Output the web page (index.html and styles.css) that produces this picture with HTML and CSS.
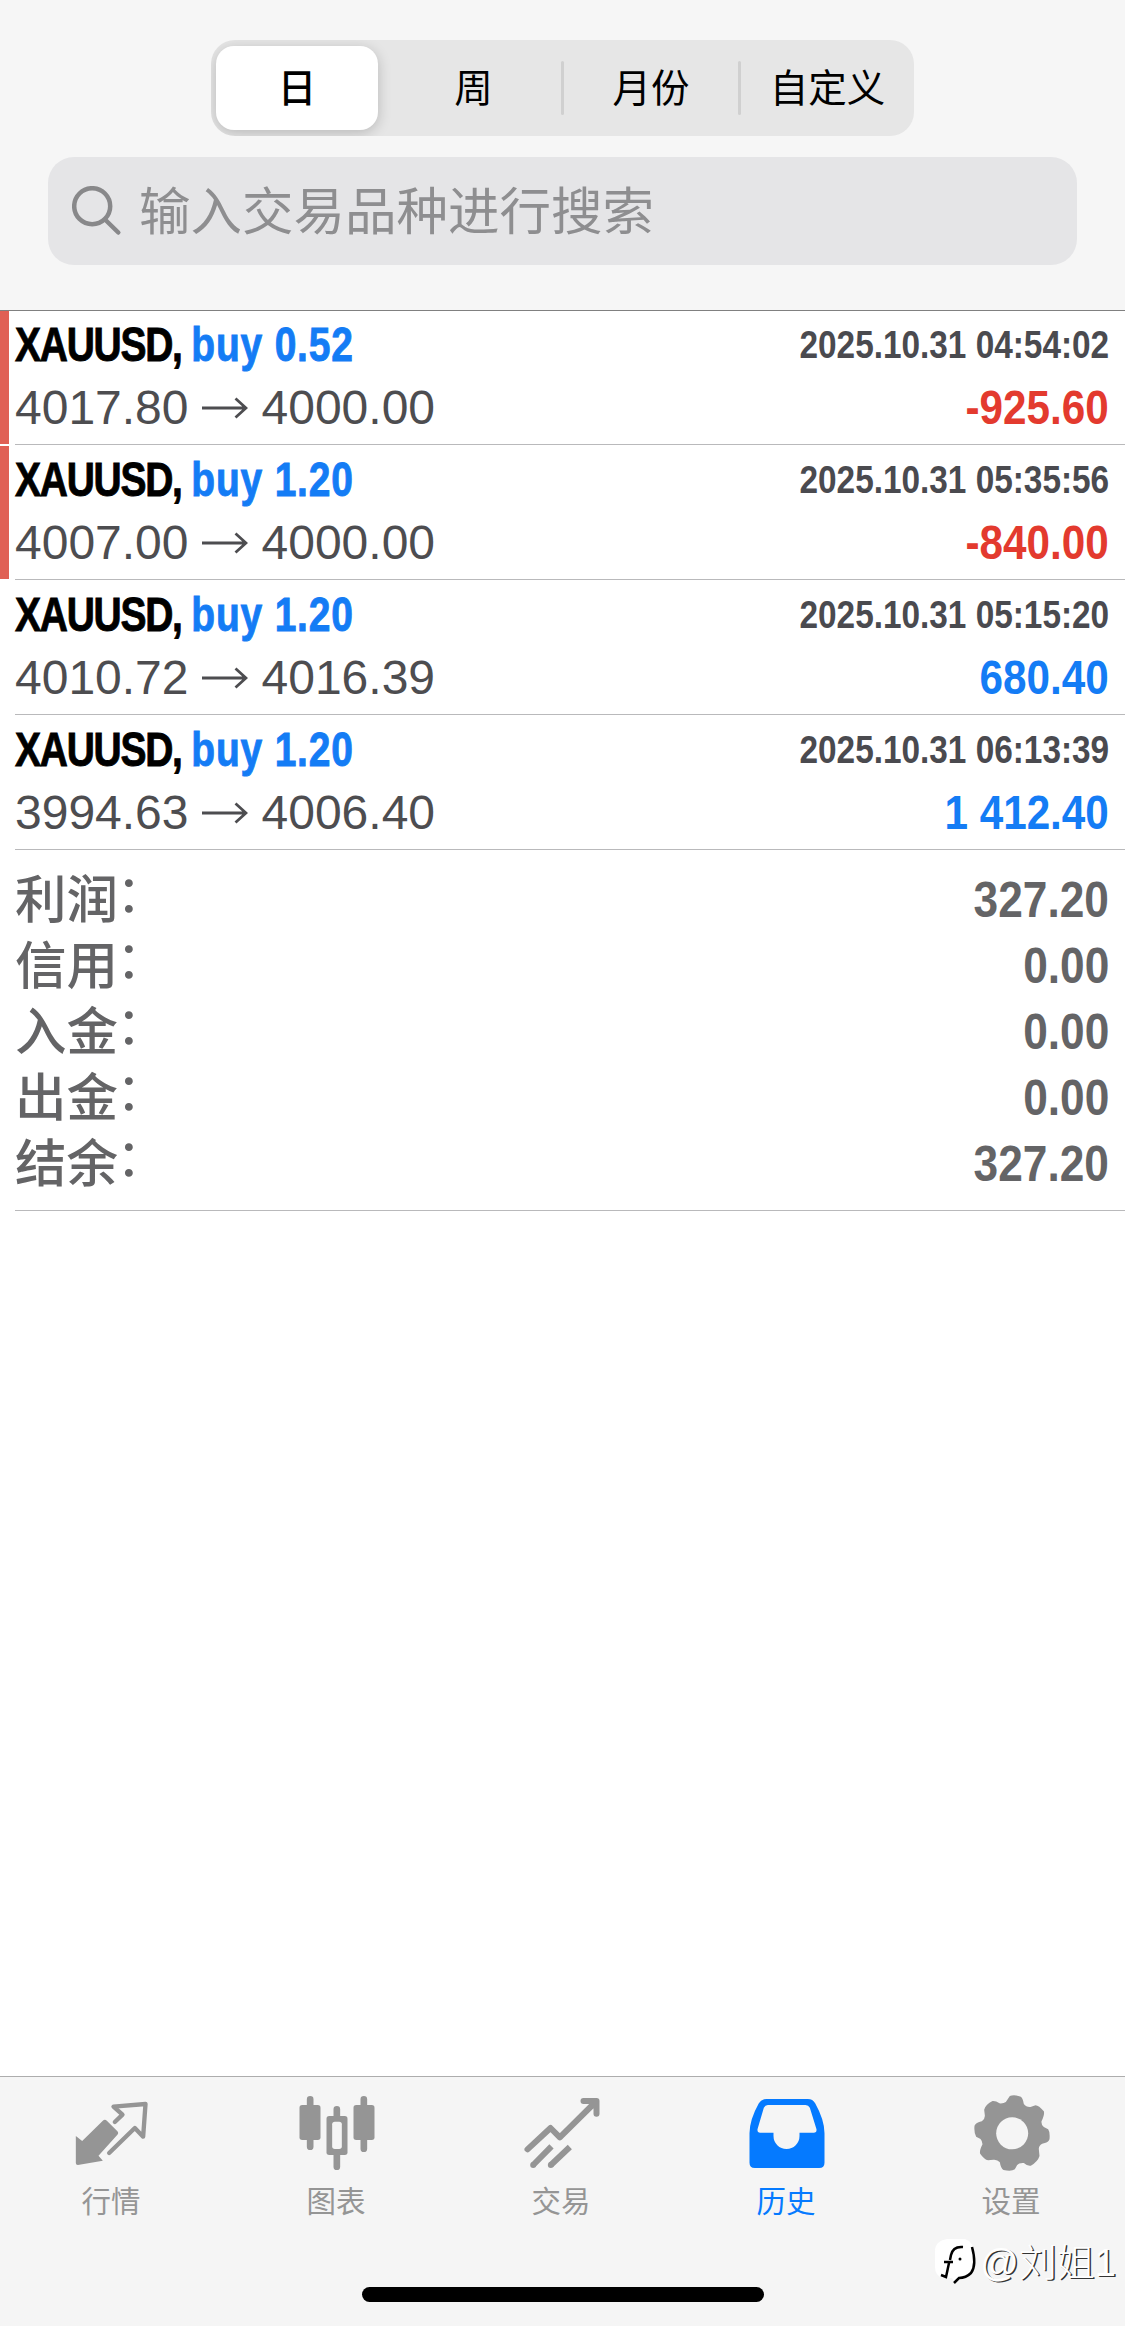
FILE: index.html
```html
<!DOCTYPE html>
<html lang="zh-CN">
<head>
<meta charset="utf-8">
<title>历史</title>
<link rel="stylesheet" href="styles.css">
</head>
<body>
<div class="screen">
  <header class="header">
    <nav class="segments">
      <span class="segment segment-active">日</span>
      <span class="segment segment-week">周</span>
      <i class="divider"></i>
      <span class="segment segment-month">月份</span>
      <i class="divider"></i>
      <span class="segment segment-custom">自定义</span>
    </nav>
    <div class="search">
      <svg class="search-icon" viewBox="0 0 50 50"><circle cx="20.2" cy="20.2" r="18" /><path d="M33 33.500L46.300 46.500" /></svg>
      <span class="search-hint">输入交易品种进行搜索</span>
    </div>
  </header>

  <main class="history">
    <article class="deal deal-loss">
      <div class="deal-body">
        <div class="line"><span class="title"><b class="symbol">XAUUSD, </b><b class="side">buy 0.52</b></span><time class="time">2025.10.31 04:54:02</time></div>
        <div class="line"><span class="prices">4017.80<svg class="arrow" viewBox="0 0 46 22"><path d="M0 11H44M33.500 1.500L44 11L33.500 20.500" /></svg>4000.00</span><span class="profit negative">-925.60</span></div>
      </div>
    </article>
    <article class="deal deal-loss">
      <div class="deal-body">
        <div class="line"><span class="title"><b class="symbol">XAUUSD, </b><b class="side">buy 1.20</b></span><time class="time">2025.10.31 05:35:56</time></div>
        <div class="line"><span class="prices">4007.00<svg class="arrow" viewBox="0 0 46 22"><path d="M0 11H44M33.500 1.500L44 11L33.500 20.500" /></svg>4000.00</span><span class="profit negative">-840.00</span></div>
      </div>
    </article>
    <article class="deal">
      <div class="deal-body">
        <div class="line"><span class="title"><b class="symbol">XAUUSD, </b><b class="side">buy 1.20</b></span><time class="time">2025.10.31 05:15:20</time></div>
        <div class="line"><span class="prices">4010.72<svg class="arrow" viewBox="0 0 46 22"><path d="M0 11H44M33.500 1.500L44 11L33.500 20.500" /></svg>4016.39</span><span class="profit">680.40</span></div>
      </div>
    </article>
    <article class="deal">
      <div class="deal-body">
        <div class="line"><span class="title"><b class="symbol">XAUUSD, </b><b class="side">buy 1.20</b></span><time class="time">2025.10.31 06:13:39</time></div>
        <div class="line"><span class="prices">3994.63<svg class="arrow" viewBox="0 0 46 22"><path d="M0 11H44M33.500 1.500L44 11L33.500 20.500" /></svg>4006.40</span><span class="profit">1 412.40</span></div>
      </div>
    </article>

    <section class="summary">
      <div class="total"><span class="label">利润<i class="colon">：</i></span><b class="amount">327.20</b></div>
      <div class="total"><span class="label">信用<i class="colon">：</i></span><b class="amount">0.00</b></div>
      <div class="total"><span class="label">入金<i class="colon">：</i></span><b class="amount">0.00</b></div>
      <div class="total"><span class="label">出金<i class="colon">：</i></span><b class="amount">0.00</b></div>
      <div class="total"><span class="label">结余<i class="colon">：</i></span><b class="amount">327.20</b></div>
    </section>
  </main>

  <footer class="tabbar">
    <div class="tabs">
      <div class="tab">
        <svg class="tab-icon" viewBox="97.500 99 240 240">
          <path class="fill" d="M106 228L125 243L187 182Q193 177 199 182L230 213Q236 219 230 225L174 287L187 302L112 315Q106 315 106 309Z" />
          <path class="stroke" stroke-width="13" stroke-linejoin="round" d="M223 186L246 164L219 140L315 132L308 230L283 204L206 279" stroke-linecap="round" />
        </svg>
        <span>行情</span>
      </div>
      <div class="tab">
        <svg class="tab-icon" viewBox="772.500 99 240 240">
          <path class="stroke" stroke-width="20" stroke-linecap="round" d="M809 118V260M970 118V266M889 148V172M889 282V320" />
          <rect class="fill" x="777" y="135" width="63" height="105" rx="8" />
          <rect class="fill" x="939" y="135" width="63" height="105" rx="8" />
          <rect class="fill" x="858" y="168" width="63" height="117" rx="8" />
          <rect class="hole" x="875" y="185" width="29" height="82" rx="8" />
        </svg>
        <span>图表</span>
      </div>
      <div class="tab">
        <svg class="tab-icon" viewBox="97.500 99 240 240">
          <path class="stroke" stroke-width="18" stroke-linecap="round" stroke-linejoin="round" d="M111 268L180 204L208 232L315 126M279 123H318V161" />
          <path class="stroke" stroke-width="18" d="M128 315L183 259M181 315L238 261" />
          <circle class="fill" cx="128" cy="315" r="9" /><circle class="fill" cx="181" cy="315" r="9" />
        </svg>
        <span>交易</span>
      </div>
      <div class="tab tab-active">
        <svg class="tab-icon" viewBox="772.500 99 240 240">
          <path class="fill" d="M828 117H952Q967 117 974 130Q1002 180 1002 220V308Q1002 324 986 324H793Q777 324 777 308V220Q777 180 805 130Q813 117 828 117Z" />
          <path class="hole" d="M832 135H945Q954 135 958 143L978 208Q979 218 970 218H927V228A39 39 0 0 1 849 228V218H809Q800 218 801 208L820 143Q824 135 832 135Z" />
        </svg>
        <span>历史</span>
      </div>
      <div class="tab">
        <svg class="tab-icon" viewBox="217.500 99 240 240">
          <path class="fill" d="M328 108Q342 103 361 110Q367 114 370 132Q377 142 390 141L405 136Q415 136 430 154Q433 163 423 184Q422 195 430 201L443 208Q449 216 447 238Q443 249 425 251Q414 257 415 268L417 288Q412 305 391 317Q381 319 370 309Q355 308 350 315L343 328Q333 335 309 330Q301 326 298 307Q291 298 279 299L263 301Q251 298 239 281Q236 273 246 253Q245 242 240 237L227 230Q220 220 222 197Q226 188 244 184Q254 176 253 166L251 149Q256 132 276 123Q286 122 297 130Q309 131 316 126Z" />
          <circle class="hole" cx="335" cy="220" r="48" />
        </svg>
        <span>设置</span>
      </div>
    </div>
    <div class="home-indicator"></div>
    <div class="watermark">
      <svg class="watermark-logo" viewBox="0 0 40 48">
        <path class="badge" d="M12 0H30Q39 3 39 14V26Q39 36 27 39L20 44L17 39H8Q0 37 0 28V12Q0 2 12 0Z" />
        <path class="ink" d="M28 8Q18 7 16 16L15 21M9 23H18M14 24L11 38L6 36M37 8Q42 26 36 34Q31 39 24 39L19 44" />
        <circle cx="25" cy="20" r="1.500" />
      </svg>
      <span>@刘姐1</span>
    </div>
  </footer>
</div>
</body>
</html>
```
FILE: styles.css
```css
* { box-sizing: border-box; }

body {
  margin: 0;
  background: #fff;
  font-family: "Liberation Sans", "Noto Sans CJK SC", sans-serif;
}

i { font-style: normal; }

.screen {
  width: 1125px;
  height: 2326px;
  display: flex;
  flex-direction: column;
  overflow: hidden;
}

/* Header */
.header {
  height: 311px;
  padding: 40px 48px 0;
  background: #f6f6f6;
  border-bottom: 1px solid #808080;
}

.segments {
  width: 703px;
  height: 96px;
  margin: 0 auto 21px 163px;
  padding: 6px 0 6px 5px;
  display: flex;
  align-items: center;
  border-radius: 24px;
  background: #e6e6e6;
  overflow: hidden;
}

.segment {
  height: 84px;
  padding-top: 1px;
  text-align: center;
  font-size: 38.500px;
  line-height: 84px;
  color: #000;
}

.segment-active {
  width: 162px;
  margin-right: 8px;
  border-radius: 18px;
  background: #fff;
  box-shadow: 0 3px 14px rgba(0, 0, 0, 0.2);
  font-weight: 500;
}

.segment-week { width: 175px; }
.segment-month { width: 174px; }
.segment-custom { flex: 1; }

.divider {
  width: 3px;
  height: 54px;
  border-radius: 2px;
  background: #d0d0d0;
}

.search {
  height: 108px;
  padding-left: 24px;
  display: flex;
  align-items: center;
  border-radius: 26px;
  background: #e5e5e7;
}

.search-icon {
  width: 50px;
  height: 50px;
  margin-right: 17px;
  fill: none;
  stroke: #88888a;
  stroke-width: 4.500;
  stroke-linecap: round;
}

.search-hint {
  padding-top: 3px;
  font-size: 51.500px;
  line-height: 105px;
  color: #8e8e90;
}

/* Deals */
.history { flex: 1; }

.deal {
  height: 135px;
  padding-left: 15px;
}

.deal-loss {
  background: linear-gradient(#e06055, #e06055) 0 0 / 9px 133px no-repeat;
}

.deal-body {
  height: 134px;
  padding: 2px 16px 0 0;
  border-bottom: 1px solid #b9b9bb;
}

.line {
  height: 63px;
  display: flex;
  justify-content: space-between;
  line-height: 63px;
  white-space: pre;
}

.title {
  font-size: 47.500px;
  -webkit-text-stroke: 0.9px;
  transform: scaleX(0.82);
  transform-origin: left;
}

.symbol { letter-spacing: -1.500px; color: #000; }
.side { letter-spacing: 1px; color: #147cf5; }

.time {
  font-size: 39px;
  font-weight: 700;
  color: #4a4a4f;
  transform: scaleX(0.855);
  transform-origin: right;
}

.prices {
  display: flex;
  align-items: center;
  font-size: 48px;
  color: #4d4d50;
}

.arrow {
  width: 46px;
  height: 22px;
  margin: 0 14px 0 13px;
  fill: none;
  stroke: #4d4d50;
  stroke-width: 2.800;
}

.profit {
  font-size: 48px;
  font-weight: 700;
  color: #147cf5;
  transform: scaleX(0.88);
  transform-origin: right;
}

.negative { color: #e33a2e; }

/* Totals */
.summary {
  height: 360px;
  margin-left: 15px;
  padding: 16px 16px 0 0;
  border-bottom: 1px solid #b9b9bb;
}

.total {
  height: 66px;
  display: flex;
  justify-content: space-between;
  font-size: 51.500px;
  line-height: 66px;
  font-weight: 500;
  color: #646466;
}

.label { display: flex; }

.colon {
  margin: -6px 0 0 -2px;
  font-weight: 400;
}

.amount {
  font-size: 50px;
  transform: scaleX(0.885);
  transform-origin: right;
}

/* Tab bar */
.tabbar {
  position: relative;
  height: 250px;
  border-top: 1px solid #adadad;
  background: #f5f5f5;
}

.tabs {
  display: flex;
  padding-top: 16px;
}

.tab {
  flex: 1;
  display: flex;
  flex-direction: column;
  align-items: center;
  color: #959595;
  font-size: 29.500px;
  line-height: 44px;
}

.tab span { margin-right: 3px; margin-top: 7px; }
.tab-active { color: #057aff; }

.tab-icon { width: 80px; height: 80px; }
.fill { fill: currentColor; }
.stroke { fill: none; stroke: currentColor; }
.hole { fill: #f5f5f5; }

.home-indicator {
  width: 402px;
  height: 15px;
  margin: 63px auto 0;
  border-radius: 8px;
  background: #000;
}

.watermark {
  position: absolute;
  right: 9px;
  bottom: 34px;
  display: flex;
  align-items: center;
  gap: 5px;
  font-size: 38px;
  line-height: 58px;
  font-weight: 300;
  color: #fff;
  text-shadow: 1.500px 1px 0 #333;
}

.watermark-logo { width: 40px; height: 48px; overflow: visible; }
.badge { fill: #fff; }
.ink { fill: none; stroke: #000; stroke-width: 2.500; }
```
